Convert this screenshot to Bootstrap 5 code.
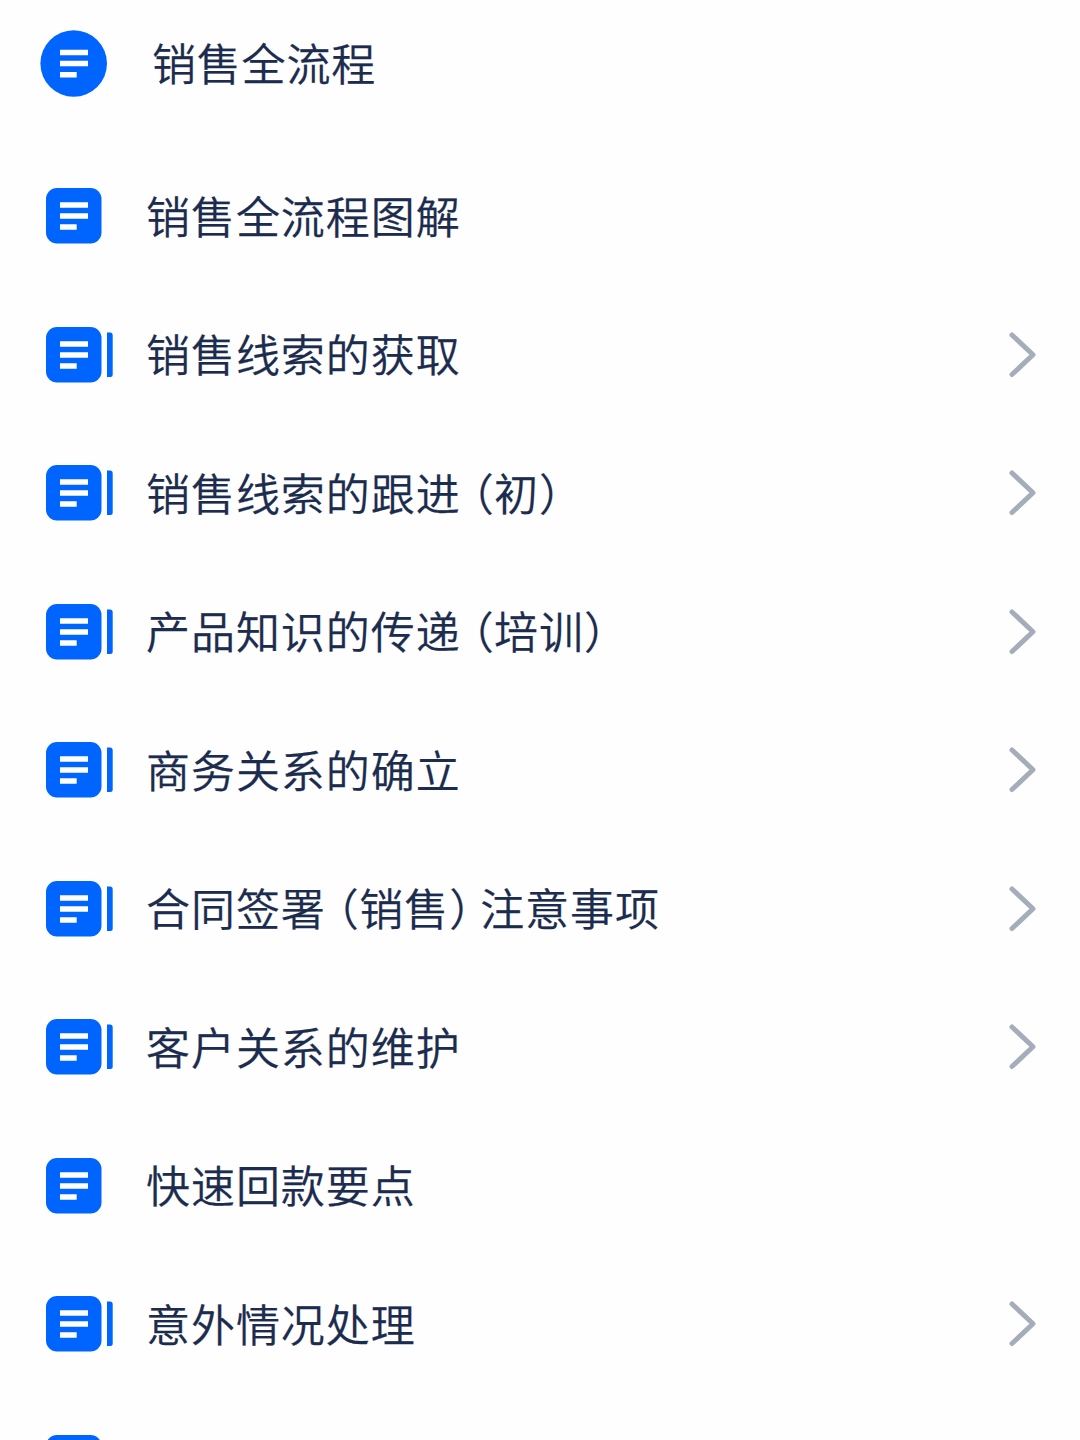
<!DOCTYPE html>
<html lang="zh-CN">
<head>
<meta charset="utf-8">
<meta name="viewport" content="width=device-width, initial-scale=1">
<title>销售全流程</title>
<link href="https://cdn.jsdelivr.net/npm/bootstrap@5.3.0/dist/css/bootstrap.min.css" rel="stylesheet">
<style>
body{background:#fefefe;color:#1b2c4e;font-family:"Noto Sans CJK SC",sans-serif;font-size:44px;overflow:hidden}
.outline-page{height:1440px}
.head-row{height:146.8px;padding:0 0 20px 40px}
.doc-row{height:138.5px;padding:0 44px 0 46px}
.doc-icon{width:68px;height:56px;margin-right:32px}
.head-icon{width:67px;height:67px;margin-right:45px}
.doc-title{letter-spacing:.95px;line-height:1;font-weight:350;white-space:nowrap;padding-bottom:3px;-webkit-text-stroke:.25px #1b2c4e}
.head-row .doc-title{letter-spacing:.8px}
.paren-open,.paren-close{font-feature-settings:"halt" 1}
.paren-open{margin-left:11px;margin-right:-.5px}
.paren-close{margin-right:8px}
.chevron{width:27px;height:46px}
</style>
</head>
<body>
<svg class="d-none">
<symbol id="doc" viewBox="0 0 68 56"><rect width="55.5" height="55.5" rx="11" fill="#0065ff"/><path d="M14 17H42M14 28H42M14 39H30.7" stroke="#fff" stroke-width="5.5"/></symbol>
<symbol id="docs" viewBox="0 0 68 56"><rect width="55.5" height="55.5" rx="11" fill="#0065ff"/><path d="M14 17H42M14 28H42M14 39H30.7" stroke="#fff" stroke-width="5.5"/><path d="M61 5.5H64.5Q66.7 5.5 66.7 8V48Q66.7 50 64.5 50H61Z" fill="#0065ff"/></symbol>
<symbol id="chev" viewBox="0 0 27 46"><path d="M3 3L24 22.8L3 42.5" fill="none" stroke="#a5adba" stroke-width="5" stroke-linecap="round" stroke-linejoin="round"/></symbol>
</svg>
<main class="outline-page overflow-hidden">
<div class="head-row d-flex align-items-center"><svg class="head-icon flex-shrink-0" viewBox="0 0 67 67"><circle cx="33.7" cy="33.5" r="33.3" fill="#0065ff"/><path d="M20 22.5H48M20 33.5H48M20 44.7H36.7" stroke="#fff" stroke-width="5.5"/></svg><span class="doc-title">销售全流程</span></div>
<div class="doc-row d-flex align-items-center"><svg class="doc-icon flex-shrink-0"><use href="#doc"/></svg><span class="doc-title">销售全流程图解</span></div>
<div class="doc-row d-flex align-items-center"><svg class="doc-icon flex-shrink-0"><use href="#docs"/></svg><span class="doc-title">销售线索的获取</span><svg class="chevron ms-auto"><use href="#chev"/></svg></div>
<div class="doc-row d-flex align-items-center"><svg class="doc-icon flex-shrink-0"><use href="#docs"/></svg><span class="doc-title">销售线索的跟进<span class="paren-open">（</span>初<span class="paren-close">）</span></span><svg class="chevron ms-auto"><use href="#chev"/></svg></div>
<div class="doc-row d-flex align-items-center"><svg class="doc-icon flex-shrink-0"><use href="#docs"/></svg><span class="doc-title">产品知识的传递<span class="paren-open">（</span>培训<span class="paren-close">）</span></span><svg class="chevron ms-auto"><use href="#chev"/></svg></div>
<div class="doc-row d-flex align-items-center"><svg class="doc-icon flex-shrink-0"><use href="#docs"/></svg><span class="doc-title">商务关系的确立</span><svg class="chevron ms-auto"><use href="#chev"/></svg></div>
<div class="doc-row d-flex align-items-center"><svg class="doc-icon flex-shrink-0"><use href="#docs"/></svg><span class="doc-title">合同签署<span class="paren-open">（</span>销售<span class="paren-close">）</span>注意事项</span><svg class="chevron ms-auto"><use href="#chev"/></svg></div>
<div class="doc-row d-flex align-items-center"><svg class="doc-icon flex-shrink-0"><use href="#docs"/></svg><span class="doc-title">客户关系的维护</span><svg class="chevron ms-auto"><use href="#chev"/></svg></div>
<div class="doc-row d-flex align-items-center"><svg class="doc-icon flex-shrink-0"><use href="#doc"/></svg><span class="doc-title">快速回款要点</span></div>
<div class="doc-row d-flex align-items-center"><svg class="doc-icon flex-shrink-0"><use href="#docs"/></svg><span class="doc-title">意外情况处理</span><svg class="chevron ms-auto"><use href="#chev"/></svg></div>
<div class="doc-row d-flex align-items-center"><svg class="doc-icon flex-shrink-0"><use href="#doc"/></svg></div>
</main>
<script src="https://cdn.jsdelivr.net/npm/bootstrap@5.3.0/dist/js/bootstrap.bundle.min.js"></script>
</body>
</html>
